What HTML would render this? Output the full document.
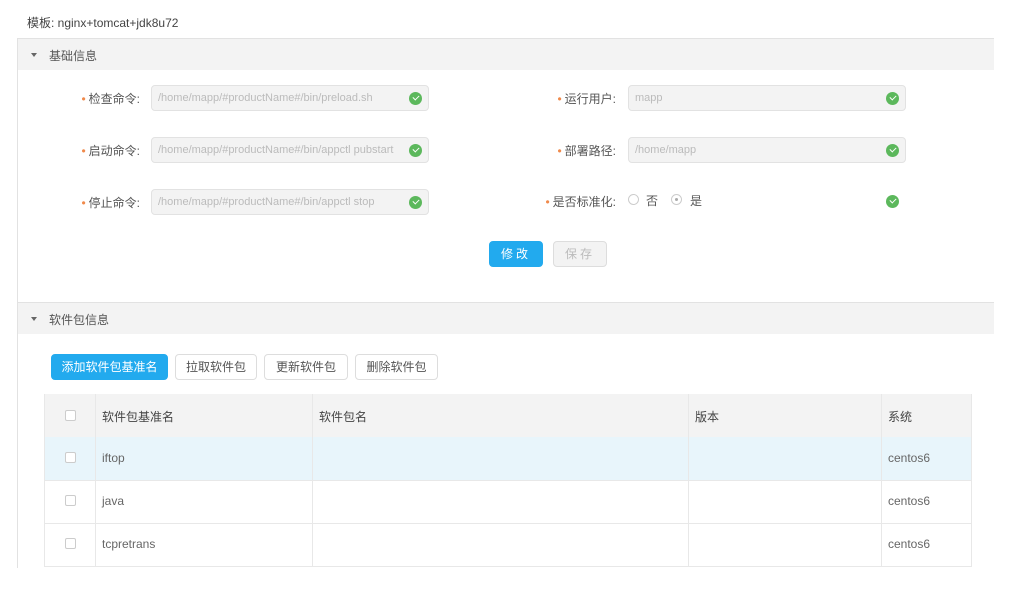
<!DOCTYPE html>
<html><head><meta charset="utf-8"><style>
*{box-sizing:border-box;margin:0;padding:0}
body{width:1009px;height:595px;background:#fff;font-family:"Liberation Sans","Noto Sans CJK SC",sans-serif;font-size:12px;color:#666;position:relative;overflow:hidden}
.a{position:absolute}
.hdr{background:#f3f3f3;border-top:1px solid #e2e2e2;height:32px;left:18px;width:976px}
.hdr span{position:absolute;left:31px;top:8px;font-size:12px;color:#555}
.tri{position:absolute;left:13px;top:14px;width:0;height:0;border-left:3.5px solid transparent;border-right:3.5px solid transparent;border-top:4px solid #666}
.lbl{font-size:12px;color:#555;text-align:right;width:120px}
.lbl b{color:#f08a4b;font-weight:normal;margin-right:3px}
.inp{height:26px;background:#f3f3f3;border:1px solid #e2e2e2;border-radius:4px;color:#bbb;font-size:11px;padding:0 6px;line-height:24px;white-space:nowrap;overflow:hidden}
.ok{width:13px;height:13px;border-radius:50%;background:#5cb85c}
.ok:after{content:"";position:absolute;left:3.5px;top:3px;width:5px;height:3px;border-left:1.5px solid #fff;border-bottom:1.5px solid #fff;transform:rotate(-45deg)}
.btn{height:26px;border:1px solid #ddd;border-radius:4px;background:#fff;text-align:center;line-height:24px;font-size:12px;color:#555}
.blue{background:#22aaee;border-color:#22aaee;color:#fff}
.cb{width:11px;height:11px;border:1px solid #ccc;border-radius:2px;background:#fff}
.vl{width:1px;background:#e8e8e8}
.hl{height:1px;background:#e8e8e8}
.rad{width:11px;height:11px;border:1px solid #ccc;border-radius:50%}
</style></head><body>
<div class="a" style="left:27px;top:14px;font-size:12px;color:#444">模板: nginx+tomcat+jdk8u72</div>
<div class="a" style="left:17px;top:38px;width:1px;height:530px;background:#e2e2e2"></div>
<div class="a hdr" style="top:38px"><i class="tri"></i><span>基础信息</span></div>

<div class="a lbl" style="left:20px;top:90px"><b>•</b>检查命令:</div>
<div class="a inp" style="left:151px;top:85px;width:278px">/home/mapp/#productName#/bin/preload.sh</div>
<div class="a ok" style="left:409px;top:92px"></div>
<div class="a lbl" style="left:20px;top:142px"><b>•</b>启动命令:</div>
<div class="a inp" style="left:151px;top:137px;width:278px">/home/mapp/#productName#/bin/appctl pubstart</div>
<div class="a ok" style="left:409px;top:144px"></div>
<div class="a lbl" style="left:20px;top:194px"><b>•</b>停止命令:</div>
<div class="a inp" style="left:151px;top:189px;width:278px">/home/mapp/#productName#/bin/appctl stop</div>
<div class="a ok" style="left:409px;top:196px"></div>

<div class="a lbl" style="left:496px;top:90px"><b>•</b>运行用户:</div>
<div class="a inp" style="left:628px;top:85px;width:278px">mapp</div>
<div class="a ok" style="left:886px;top:92px"></div>
<div class="a lbl" style="left:496px;top:142px"><b>•</b>部署路径:</div>
<div class="a inp" style="left:628px;top:137px;width:278px">/home/mapp</div>
<div class="a ok" style="left:886px;top:144px"></div>
<div class="a lbl" style="left:496px;top:193px"><b>•</b>是否标准化:</div>
<div class="a rad" style="left:628px;top:194px"></div>
<div class="a" style="left:646px;top:192px;color:#555">否</div>
<div class="a rad" style="left:671px;top:194px"><i class="a" style="left:3px;top:3px;width:3px;height:3px;border-radius:50%;background:#aaa"></i></div>
<div class="a" style="left:690px;top:192px;color:#555">是</div>
<div class="a ok" style="left:886px;top:195px"></div>

<div class="a btn blue" style="left:489px;top:241px;width:54px;letter-spacing:3px">修改</div>
<div class="a btn" style="left:553px;top:241px;width:54px;background:#f3f3f3;color:#bbb;letter-spacing:3px">保存</div>

<div class="a hdr" style="top:302px"><i class="tri"></i><span>软件包信息</span></div>

<div class="a btn blue" style="left:51px;top:354px;width:117px">添加软件包基准名</div>
<div class="a btn" style="left:175px;top:354px;width:82px">拉取软件包</div>
<div class="a btn" style="left:264px;top:354px;width:84px">更新软件包</div>
<div class="a btn" style="left:355px;top:354px;width:83px">删除软件包</div>

<div class="a" style="left:44px;top:394px;width:928px;height:43px;background:#f3f3f3"></div>
<div class="a" style="left:44px;top:437px;width:928px;height:43px;background:#e8f5fb"></div>
<div class="a" style="left:44px;top:394px;width:1px;height:173px;background:#e8e8e8"></div>
<div class="a" style="left:971px;top:394px;width:1px;height:173px;background:#e8e8e8"></div>
<div class="a vl" style="left:95px;top:394px;height:173px"></div>
<div class="a vl" style="left:312px;top:394px;height:173px"></div>
<div class="a vl" style="left:688px;top:394px;height:173px"></div>
<div class="a vl" style="left:881px;top:394px;height:173px"></div>
<div class="a hl" style="left:44px;top:480px;width:928px"></div>
<div class="a hl" style="left:44px;top:523px;width:928px"></div>
<div class="a hl" style="left:44px;top:566px;width:928px"></div>

<div class="a cb" style="left:65px;top:410px"></div>
<div class="a cb" style="left:65px;top:452px"></div>
<div class="a cb" style="left:65px;top:495px"></div>
<div class="a cb" style="left:65px;top:538px"></div>
<div class="a" style="left:102px;top:408px;color:#444">软件包基准名</div>
<div class="a" style="left:319px;top:408px;color:#444">软件包名</div>
<div class="a" style="left:695px;top:408px;color:#444">版本</div>
<div class="a" style="left:888px;top:408px;color:#444">系统</div>
<div class="a" style="left:102px;top:451px">iftop</div>
<div class="a" style="left:888px;top:451px">centos6</div>
<div class="a" style="left:102px;top:494px">java</div>
<div class="a" style="left:888px;top:494px">centos6</div>
<div class="a" style="left:102px;top:537px">tcpretrans</div>
<div class="a" style="left:888px;top:537px">centos6</div>
</body></html>
